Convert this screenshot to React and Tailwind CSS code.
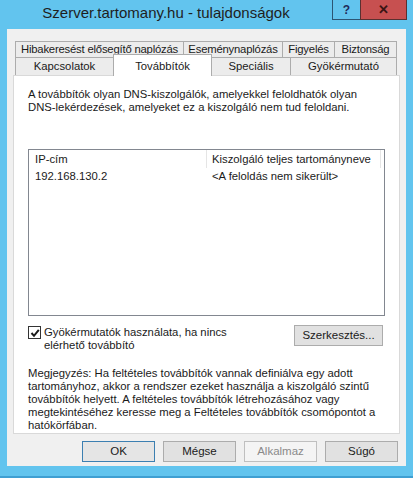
const topTabs = [
  { label: "Hibakeresést elősegítő naplózás", w: "w-[169px]" },
  { label: "Eseménynaplózás", w: "w-[99px]" },
  { label: "Figyelés", w: "w-[52px]" },
  { label: "Biztonság", w: "w-[62px]" },
]

function DialogButton({ children, variant }) {
  const look =
    variant === "default"
      ? "border-[#3c7fb1] bg-[#e5e5e5] text-[#1a1a1a]"
      : variant === "disabled"
      ? "border-[#bfbfbf] bg-[#f4f4f4] text-[#8a8a8a]"
      : "border-[#acacac] bg-[#e1e1e1] text-[#1a1a1a]"
  return (
    <button className={`h-[21px] w-[73px] border text-[11.5px] leading-none ${look}`}>
      {children}
    </button>
  )
}

export default function App() {
  return (
    <div
      className="flex h-[478px] w-[413px] flex-col bg-[#62c4ee] border-b-2 border-[#3f9fd2]"
      style={{ fontFamily: '"Liberation Sans", Arial, sans-serif' }}
    >
      {/* Title bar */}
      <div className="flex h-[29px] shrink-0">
        <div className="flex w-[332px] items-center justify-center pb-[2px] text-[15px] text-[#1e1e1e]">
          Szerver.tartomany.hu - tulajdonságok
        </div>
        <div className="flex h-[20px] w-[28px] items-center justify-center border-b border-l border-[#2c5573] text-[12px] font-bold text-[#1f2a5a]">
          ?
        </div>
        <div className="flex h-[20px] w-[47px] items-center justify-center border border-t-0 border-[#5a3030] bg-[#c75050] text-[13px] font-bold text-[#3a1414]">
          ✕
        </div>
      </div>

      {/* Dialog body */}
      <div className="mx-[7px] flex h-[437px] flex-col whitespace-nowrap bg-[#f0f0f0] pt-[12px] text-[11.3px]">
        {/* Tabs */}
        <div className="ml-[8px] flex tracking-[-0.2px]">
          {topTabs.map((t, i) => (
            <div
              key={t.label}
              className={`flex h-[16px] items-center justify-center border-t border-r border-[#acacac] bg-[#ececec] text-[#1a1a1a] ${t.w} ${i === 0 ? "border-l" : ""}`}
            >
              {t.label}
            </div>
          ))}
        </div>
        <div className="relative z-10 ml-[8px] flex h-[18px] items-end">
          <div className="flex h-[18px] w-[98px] items-center justify-center border-t border-l border-[#acacac] bg-[#ececec] text-[#1a1a1a]">
            Kapcsolatok
          </div>
          <div className="-mb-px flex h-[22px] w-[99px] items-start justify-center border-x border-t border-[#acacac] bg-white pt-[3px] text-[#1a1a1a]">
            Továbbítók
          </div>
          <div className="flex h-[18px] w-[79px] items-center justify-center border-t border-r border-[#acacac] bg-[#ececec] text-[#1a1a1a]">
            Speciális
          </div>
          <div className="flex h-[18px] w-[106px] items-center justify-center border-t border-r border-[#acacac] bg-[#ececec] text-[#1a1a1a]">
            Gyökérmutató
          </div>
        </div>

        {/* Panel */}
        <div className="ml-[6px] flex h-[359px] w-[387px] flex-col border border-[#d9d9d9] bg-white px-[14px] leading-[13px] text-[#1a1a1a]">
          <p className="mt-[12px]">
            A továbbítók olyan DNS-kiszolgálók, amelyekkel feloldhatók olyan
            <br />
            DNS-lekérdezések, amelyeket ez a kiszolgáló nem tud feloldani.
          </p>

          <div className="mt-[35px] h-[167px] w-[357px] border border-[#828790] bg-white">
            <div className="flex h-[18px] items-center">
              <div className="flex h-full w-[178px] shrink-0 items-center border-r border-[#e5e5e5] pl-[6px]">
                IP-cím
              </div>
              <div className="flex h-full w-[174px] shrink-0 items-center border-r border-[#e5e5e5] pl-[5px]">
                Kiszolgáló teljes tartományneve
              </div>
            </div>
            <div className="flex h-[17px] items-center">
              <div className="w-[178px] shrink-0 pl-[6px]">192.168.130.2</div>
              <div className="pl-[5px]">&lt;A feloldás nem sikerült&gt;</div>
            </div>
          </div>

          <div className="mt-[9px] flex items-start justify-between">
            <div className="flex items-start gap-[3px]">
              <div className="mt-px flex h-[13px] w-[13px] items-center justify-center border border-[#333333] bg-white">
                <svg width="10" height="10" viewBox="0 0 10 10">
                  <path d="M1.5 5 L4 7.8 L8.8 1.8" fill="none" stroke="#1a1a1a" strokeWidth="2" />
                </svg>
              </div>
              <div className="pt-px">
                Gyökérmutatók használata, ha nincs
                <br />
                elérhető továbbító
              </div>
            </div>
            <button className="mr-[2px] h-[21px] w-[89px] border border-[#acacac] bg-[#e1e1e1] text-[11.5px] leading-none">
              Szerkesztés...
            </button>
          </div>

          <p className="mt-[15px]">
            Megjegyzés: Ha feltételes továbbítók vannak definiálva egy adott
            <br />
            tartományhoz, akkor a rendszer ezeket használja a kiszolgáló szintű
            <br />
            továbbítók helyett. A feltételes továbbítók létrehozásához vagy
            <br />
            megtekintéséhez keresse meg a Feltételes továbbítók csomópontot a
            <br />
            hatókörfában.
          </p>
        </div>

        {/* Buttons */}
        <div className="mt-[7px] flex justify-end gap-[8px] pr-[8px]">
          <DialogButton variant="default">OK</DialogButton>
          <DialogButton>Mégse</DialogButton>
          <DialogButton variant="disabled">Alkalmaz</DialogButton>
          <DialogButton>Súgó</DialogButton>
        </div>
      </div>
    </div>
  )
}
